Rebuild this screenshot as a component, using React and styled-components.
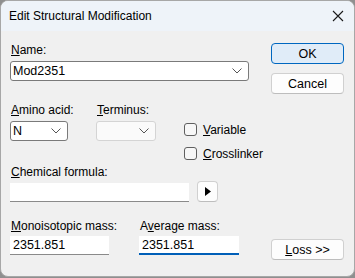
import React from 'react';
import styled, { createGlobalStyle } from 'styled-components';

const Global = createGlobalStyle`
  html, body {
    margin: 0;
    padding: 0;
    background: #8f8f8f;
    width: 355px;
    height: 278px;
    overflow: hidden;
  }
  * { box-sizing: border-box; }
`;

const Window = styled.div`
  width: 355px;
  height: 277px;
  background: #f0f0f0;
  border: 1px solid #a7a7a7;
  border-radius: 8px;
  overflow: hidden;
  display: flex;
  flex-direction: column;
  font-family: 'Liberation Sans', Arial, sans-serif;
  font-size: 12px;
  color: #000;
`;

const TitleBar = styled.div`
  height: 30px;
  background: #eef3f9;
  display: flex;
  align-items: center;
  justify-content: space-between;
  padding: 0 10px 0 8px;
  flex-shrink: 0;
`;

const TitleText = styled.span`
  font-size: 12px;
`;

const Body = styled.div`
  flex: 1;
  display: flex;
  padding: 12px 11px 0 9px;
`;

const Form = styled.div`
  width: 240px;
  flex-shrink: 0;
  display: flex;
  flex-direction: column;
`;

const Side = styled.div`
  margin-left: 21px;
  width: 73px;
  display: flex;
  flex-direction: column;
  gap: 9px;
`;

const Label = styled.div`
  line-height: 14px;
  height: 14px;
  margin-bottom: ${p => p.gap || 4}px;
  padding-left: 1px;
  white-space: nowrap;
`;

const Key = styled.span`
  text-decoration: underline;
  text-underline-offset: 1px;
`;

const Combo = styled.div`
  width: ${p => p.w}px;
  height: 20px;
  background: ${p => (p.disabled ? '#fafafa' : '#fff')};
  border: 1px solid ${p => (p.disabled ? '#d4d4d4' : '#7a7a7a')};
  border-radius: 3px;
  display: flex;
  align-items: center;
  justify-content: space-between;
  padding: 0 6px 0 2px;
  font-size: 12.5px;
`;

const Edit = styled.div`
  width: ${p => p.w}px;
  height: 19px;
  flex-shrink: 0;
  background: #fff;
  border-bottom: ${p => (p.focus ? '2px solid #005fb8' : '1px solid #8a8a8a')};
  display: flex;
  align-items: center;
  padding: 0 3px;
  font-size: 12.5px;
`;

const Row = styled.div`
  display: flex;
  align-items: ${p => p.align || 'flex-start'};
  margin-top: ${p => p.top || 0}px;
`;

const Group = styled.div`
  width: ${p => p.w}px;
  flex-shrink: 0;
  display: flex;
  flex-direction: column;
`;

const Checks = styled.div`
  flex-shrink: 0;
  display: flex;
  flex-direction: column;
  gap: 9px;
  padding-top: 19px;
`;

const Check = styled.div`
  display: flex;
  align-items: center;
  gap: 6px;
  height: 15px;
  white-space: nowrap;
`;

const Box = styled.span`
  width: 13px;
  height: 13px;
  border: 1px solid #5f5f5f;
  border-radius: 3px;
  background: #f7f7f7;
`;

const Button = styled.div`
  height: 21px;
  width: ${p => p.w || 73}px;
  flex-shrink: 0;
  border: 1px solid ${p => (p.primary ? '#0067c0' : '#d0d0d0')};
  border-bottom-color: ${p => (p.primary ? '#0067c0' : '#bdbdbd')};
  background: ${p => (p.primary ? '#e0ecf8' : '#fdfdfd')};
  border-radius: 4px;
  display: flex;
  align-items: center;
  justify-content: center;
  font-size: 12.5px;
`;

const ArrowButton = styled(Button)`
  margin-left: 8px;
  margin-top: -3px;
`;

const Spacer = styled.div`
  flex: 1;
`;

const Chevron = () => (
  <svg width="10" height="6" viewBox="0 0 10 6">
    <path d="M0.5 0.5 L5 5 L9.5 0.5" fill="none" stroke="#555" strokeWidth="1" />
  </svg>
);

const App = () => (
  <>
    <Global />
    <Window>
      <TitleBar>
        <TitleText>Edit Structural Modification</TitleText>
        <svg width="12" height="12" viewBox="0 0 12 12">
          <path d="M1 1 L11 11 M11 1 L1 11" stroke="#1a1a1a" strokeWidth="1.1" />
        </svg>
      </TitleBar>
      <Body>
        <Form>
          <Label><Key>N</Key>ame:</Label>
          <Combo w={239}>
            <span>Mod2351</span>
            <Chevron />
          </Combo>

          <Row top={22}>
            <Group w={86}>
              <Label><Key>A</Key>mino acid:</Label>
              <Combo w={58}>
                <span>N</span>
                <Chevron />
              </Combo>
            </Group>
            <Group w={88}>
              <Label><Key>T</Key>erminus:</Label>
              <Combo w={60} disabled>
                <span />
                <Chevron />
              </Combo>
            </Group>
            <Checks>
              <Check><Box /><span><Key>V</Key>ariable</span></Check>
              <Check><Box /><span><Key>C</Key>rosslinker</span></Check>
            </Checks>
          </Row>

          <Label style={{ marginTop: 4 }}><Key>C</Key>hemical formula:</Label>
          <Row align="center">
            <Edit w={179} />
            <ArrowButton w={21}>
              <svg width="6" height="9" viewBox="0 0 6 9">
                <path d="M0 0 L6 4.5 L0 9 Z" fill="#000" />
              </svg>
            </ArrowButton>
          </Row>

          <Row top={17}>
            <Group w={129}>
              <Label gap={3}><Key>M</Key>onoisotopic mass:</Label>
              <Edit w={99}>2351.851</Edit>
            </Group>
            <Group w={100}>
              <Label gap={3}>A<Key>v</Key>erage mass:</Label>
              <Edit w={100} focus>2351.851</Edit>
            </Group>
          </Row>
        </Form>
        <Side>
          <Button primary>OK</Button>
          <Button>Cancel</Button>
          <Spacer />
          <Button style={{ marginBottom: 16 }}><Key>L</Key>oss &gt;&gt;</Button>
        </Side>
      </Body>
    </Window>
  </>
);

export default App;
